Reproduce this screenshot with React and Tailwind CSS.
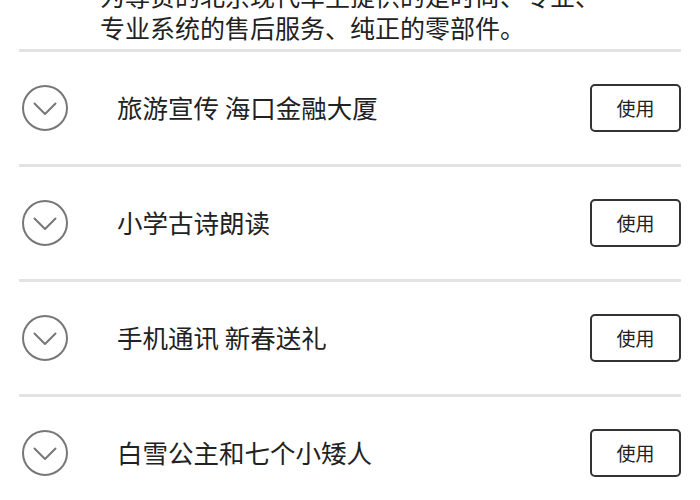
import React from 'react';

const items = ['旅游宣传 海口金融大厦', '小学古诗朗读', '手机通讯 新春送礼', '白雪公主和七个小矮人'];

const ChevronCircle = () => (
  <svg width="48" height="48" viewBox="0 0 48 48" fill="none">
    <circle cx="24" cy="24" r="22" stroke="#777" strokeWidth="2" />
    <path d="M13.5 19.5 L24 30 L34.5 19.5" stroke="#777" strokeWidth="2" strokeLinecap="round" strokeLinejoin="round" />
  </svg>
);

const Row = ({ title }) => (
  <div className="flex items-center h-[112px] pl-[2px]">
    <ChevronCircle />
    <span className="ml-[48px] flex-1 text-[25.5px] leading-none pb-[3px] text-[#222]">{title}</span>
    <button className="w-[91px] h-[48px] border-2 border-[#333] rounded-[5px] text-[19px] leading-none pb-[2px] text-[#222] bg-white">
      使用
    </button>
  </div>
);

export default function App() {
  const font = { fontFamily: '"Noto Sans CJK SC", "Noto Sans", sans-serif' };
  return (
    <div className="w-[700px] h-[500px] overflow-hidden bg-white" style={font}>
      <p className="mt-[-21px] pb-[6px] pl-[100px] text-[25px] leading-[32px] text-[#222]">
        为尊贵的北京现代车主提供的是时尚、专业、
        <br />
        专业系统的售后服务、纯正的零部件。
      </p>
      <div className="px-[19px]">
        {items.map((t) => (
          <div key={t}>
            <div className="h-[3px] bg-[#e3e3e3]" />
            <Row title={t} />
          </div>
        ))}
      </div>
    </div>
  );
}
